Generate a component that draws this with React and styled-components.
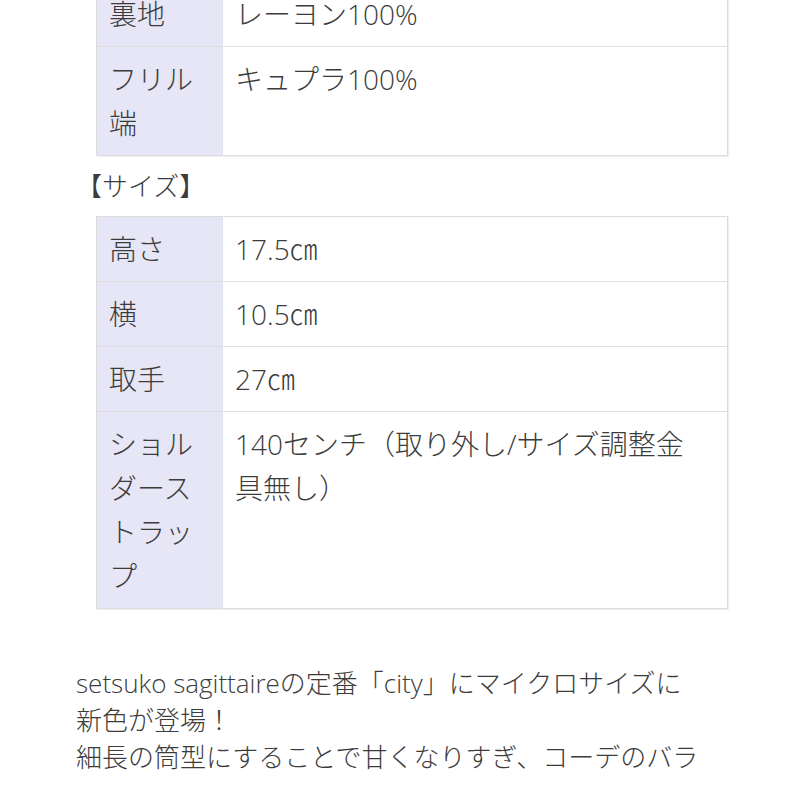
import styled, { createGlobalStyle } from "styled-components";

const GlobalStyle = createGlobalStyle`
  html, body {
    margin: 0;
    padding: 0;
    background: #fff;
    overflow: hidden;
  }
  body {
    font-family: "Open Sans", "Noto Sans CJK JP", sans-serif;
    font-weight: 300;
    color: #3c3c3c;
  }
`;

const Page = styled.main`
  width: 652px;
  padding: 0 57px 0 76px;
  height: 785px;
  overflow: hidden;
`;

const SpecTable = styled.table`
  width: calc(100% - 20px);
  margin: ${(p) => (p.$first ? "-19px" : "0")} 0 0 20px;
  border-collapse: collapse;
  border: 1px solid #dcdcdc;
  box-shadow: 1px 1px 1px rgba(0, 0, 0, 0.06);
  font-size: 28px;
  line-height: 44px;
`;

const Row = styled.tr`
  border-bottom: 1px solid #dedede;
`;

const Label = styled.th`
  width: 101px;
  padding: 10px 12px;
  background: #e6e6f6;
  border-right: 1px solid #e2e2ea;
  font-weight: 300;
  text-align: left;
  vertical-align: top;
`;

const Value = styled.td`
  padding: 10px 30px 10px 12px;
  vertical-align: top;
  background: #fff;
`;

const Heading = styled.p`
  margin: 12px 0;
  font-size: 26px;
  line-height: 36px;
`;

// only the first three lines are in view
const Paragraph = styled.p`
  margin: 56px 22px 0 0;
  font-size: 26px;
  line-height: 37px;
  max-height: 111px;
  overflow: hidden;
`;

const material = [
  ["裏地", "レーヨン100%"],
  ["フリル端", "キュプラ100%"],
];

const size = [
  ["高さ", "17.5㎝"],
  ["横", "10.5㎝"],
  ["取手", "27㎝"],
  ["ショルダーストラップ", "140センチ（取り外し/サイズ調整金具無し）"],
];

function Spec({ rows, first }) {
  return (
    <SpecTable $first={first}>
      <tbody>
        {rows.map(([k, v]) => (
          <Row key={k}>
            <Label>{k}</Label>
            <Value>{v}</Value>
          </Row>
        ))}
      </tbody>
    </SpecTable>
  );
}

export default function App() {
  return (
    <>
      <GlobalStyle />
      <Page>
        <Spec rows={material} first />
        <Heading>【サイズ】</Heading>
        <Spec rows={size} />
        <Paragraph>
          setsuko sagittaireの定番「city」にマイクロサイズに新色が登場！
          <br />
          細長の筒型にすることで甘くなりすぎ、コーデのバランスを取りやすいデザインです。
        </Paragraph>
      </Page>
    </>
  );
}
